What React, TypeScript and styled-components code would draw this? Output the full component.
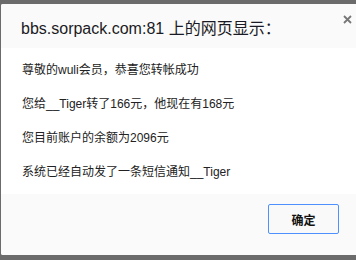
import React from "react";
import styled, { createGlobalStyle } from "styled-components";

const Global = createGlobalStyle`
  html, body { margin: 0; padding: 0; background: #6b6b6b; }
  body { width: 356px; height: 260px; overflow: hidden; }
`;

const Dialog = styled.div`
  margin: 4px 0 0 1px;
  width: 370px;
  height: 251px;
  background: #fafafa;
  border-radius: 2px;
  display: flex;
  flex-direction: column;
  font-family: "Liberation Sans", "Noto Sans CJK SC", sans-serif;
  overflow: hidden;
`;

const Header = styled.div`
  height: 44px;
  position: relative;
  display: flex;
  align-items: center;
  padding-left: 20px;
  background: #fafafa;
`;

const Title = styled.div`
  font-size: 16px;
  color: #1a1a24;
  margin-top: 2px;
`;

const Close = styled.svg`
  position: absolute;
  left: 342px;
  top: 11px;
`;

const Body = styled.div`
  height: 146px;
  background: #ffffff;
  padding: 13px 0 0 21px;
  box-sizing: border-box;
  display: flex;
  flex-direction: column;
  gap: 16px;
`;

const Line = styled.div`
  font-size: 12px;
  line-height: 18px;
  color: #222;
`;

const Footer = styled.div`
  flex: 1;
  background: #fafafa;
  display: flex;
  align-items: flex-start;
  padding: 10px 0 0 267px;
`;

const Button = styled.button`
  width: 71px;
  height: 30px;
  border: 1px solid #4d90fe;
  border-radius: 2px;
  background: #f9f9f9;
  font-family: "Noto Sans CJK SC", sans-serif;
  font-size: 12px;
  font-weight: 700;
  color: #111;
  padding: 0;
`;

export default function App() {
  return (
    <>
      <Global />
      <Dialog>
        <Header>
          <Title>bbs.sorpack.com:81 上的网页显示：</Title>
          <Close width="9" height="9" viewBox="0 0 9 9">
            <path d="M1 1L8 8M8 1L1 8" stroke="#777" strokeWidth="1.8" />
          </Close>
        </Header>
        <Body>
          <Line>尊敬的wuli会员，恭喜您转帐成功</Line>
          <Line>您给__Tiger转了166元，他现在有168元</Line>
          <Line>您目前账户的余额为2096元</Line>
          <Line>系统已经自动发了一条短信通知__Tiger</Line>
        </Body>
        <Footer>
          <Button>确定</Button>
        </Footer>
      </Dialog>
    </>
  );
}
